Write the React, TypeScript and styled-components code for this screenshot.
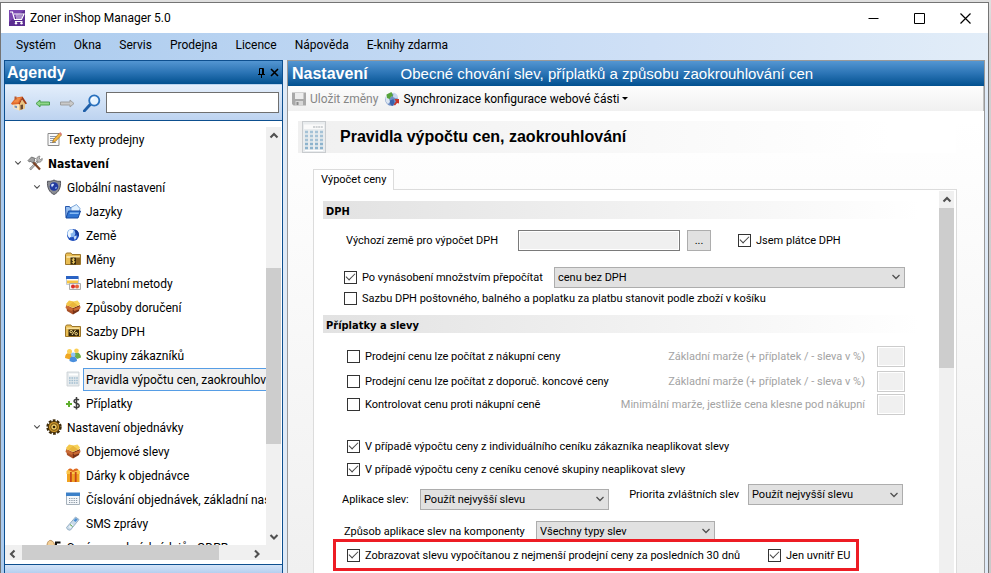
import React, { useState } from 'react';
import styled, { createGlobalStyle, css } from 'styled-components';

const uiFont = 'Roboto, "Open Sans", sans-serif';
const boldFont = '"DejaVu Sans Condensed", "DejaVu Sans", sans-serif';
const headFont = '"Liberation Sans", Arial, sans-serif';

const GlobalStyle = createGlobalStyle`
  *, *::before, *::after { box-sizing: border-box; }
  body { margin: 0; font: 11px/14px ${uiFont}; color: #000; background: #d4d2d2; }
  button, input, select { font: inherit; color: inherit; margin: 0; border-radius: 0; }
  svg { display: block; flex: none; }
`;

const Desktop = styled.div`
  height: 100vh;
  overflow: hidden;
  padding: 2px 2px 0 0;
  background: linear-gradient(#dfdfdf 0 3px, #d2d0d0 40px, #cbc9c9);
`;

const Window = styled.div`
  height: 100%;
  display: flex;
  flex-direction: column;
  border: 1px solid #747474;
  border-bottom: 0;
  background: #e2edf8;
`;

const TitleBar = styled.header`
  display: flex;
  align-items: center;
  height: 30px;
  flex: none;
  padding-left: 8px;
  gap: 5px;
  background: #fff;
  font-size: 12px;
`;

const WindowTitle = styled.h1`
  flex: 1;
  margin: 0;
  font-size: 12px;
  font-weight: 400;
`;

const CaptionButtons = styled.div`
  display: flex;
`;

const CaptionButton = styled.button`
  display: grid;
  place-items: center;
  width: 46px;
  height: 30px;
  padding: 0;
  border: 0;
  background: none;
`;

const MenuBar = styled.nav`
  display: flex;
  flex: none;
  align-items: center;
  height: 27px;
  padding: 0 6px 3px;
  background: linear-gradient(90deg, #abcbee, #cfe0f6 66%, #e2edf8);
`;

const MenuItem = styled.button`
  padding: 0 9px;
  border: 0;
  background: none;
  font-size: 12px;
`;

const Body = styled.div`
  flex: 1;
  min-height: 0;
  display: flex;
  gap: 4px;
  padding: 0 3px;
  background: linear-gradient(90deg, #abcbee 0 3px, #dfeaf7 3px);
`;

const SidePanel = styled.aside`
  width: 279px;
  flex: none;
  display: flex;
  flex-direction: column;
  border: 1px solid #0d4f8f;
  border-bottom: 0;
  background: #fff;
`;

const blueBar = css`
  display: flex;
  flex: none;
  align-items: center;
  color: #fff;
  background: linear-gradient(#5496d2, #2b74b5 50%, #01508f);
  font-family: ${headFont};
`;

const SideHeader = styled.div`
  ${blueBar}
  height: 23px;
  padding: 0 1px 0 2px;
`;

const BarTitle = styled.h2`
  flex: 1;
  margin: 0;
  font: bold 16px/20px ${headFont};
`;

const BarButton = styled.button`
  display: grid;
  place-items: center;
  width: 13px;
  height: 14px;
  padding: 0;
  border: 0;
  background: none;
`;

const SideToolbar = styled.div`
  display: flex;
  flex: none;
  align-items: center;
  height: 37px;
  padding: 0 3px 0 6px;
  gap: 8px;
  border-top: 1px solid #b9d3ee;
  border-bottom: 1px solid #0d4f8f;
  background: linear-gradient(#e3eefb, #bdd3f0);
`;

const ToolButton = styled.button`
  padding: 0;
  border: 0;
  background: none;
`;

const SearchInput = styled.input`
  flex: 1;
  min-width: 0;
  height: 21px;
  margin-left: -3px;
  padding: 0 4px;
  border: 1px solid #6f6f6f;
  background: #fff;
`;

const TreeArea = styled.div`
  flex: 1;
  min-height: 0;
  display: grid;
  grid-template-columns: minmax(0, 1fr) 15px;
  grid-template-rows: minmax(0, 1fr) 15px;
  padding: 6px 1px 4px 0;
`;

const Tree = styled.ul`
  margin: 0;
  padding: 0;
  overflow: hidden;
  list-style: none;
`;

const TreeRow = styled.li<{ $level: number }>`
  display: flex;
  align-items: center;
  height: 24px;
  gap: 2px;
  padding-left: ${p => 6 + 19 * p.$level}px;
`;

const Expander = styled.button`
  width: 14px;
  height: 16px;
  flex: none;
  display: grid;
  place-items: center start;
  padding: 0 0 0 3px;
  border: 0;
  background: none;
`;

const ExpanderGap = styled.span`
  width: 14px;
  flex: none;
`;

const TreeLabel = styled.button<{ $selected?: boolean; $strong?: boolean }>`
  height: 23px;
  flex: none;
  padding: 1px 2px 0;
  border: 1px solid ${p => (p.$selected ? '#569de5' : 'transparent')};
  background: ${p => (p.$selected ? '#f0f0f0' : 'none')};
  font-family: ${p => (p.$strong ? boldFont : uiFont)};
  font-size: 12px;
  font-weight: ${p => (p.$strong ? 700 : 400)};
  white-space: nowrap;
  text-align: left;
`;

const ScrollTrack = styled.div<{ $horizontal?: boolean }>`
  display: flex;
  flex-direction: ${p => (p.$horizontal ? 'row' : 'column')};
  background: #f0f0f0;
`;

const ScrollButton = styled.button`
  display: grid;
  place-items: center;
  flex: none;
  width: 17px;
  height: 17px;
  padding: 0 2px 0 0;
  border: 0;
  background: none;
`;

const ScrollSpace = styled.div<{ $grow: number }>`
  flex: ${p => p.$grow} 1 0;
`;

const ScrollThumb = styled.div<{ $grow: number }>`
  flex: ${p => p.$grow} 1 0;
  background: #cdcdcd;
`;

const SideFooter = styled.div`
  height: 9px;
  flex: none;
  border-top: 1px solid #0d4f8f;
  background: linear-gradient(#d3e3f7, #b5cff0);
`;

const Main = styled.main`
  flex: 1;
  min-width: 0;
  display: flex;
  flex-direction: column;
  border: 1px solid #999;
  border-bottom: 0;
  background: linear-gradient(#fff 60px, #f0f0f0);
`;

const MainHeader = styled.div`
  ${blueBar}
  height: 25px;
  padding-left: 4px;
  gap: 33px;
`;

const MainTitle = styled.h2`
  margin: 0;
  font: bold 16px/20px ${headFont};
`;

const MainSubtitle = styled.p`
  margin: 0;
  padding-top: 1px;
  font: 15px/20px ${headFont};
  white-space: nowrap;
`;

const MainToolbar = styled.div`
  display: flex;
  flex: none;
  align-items: center;
  height: 25px;
  gap: 6px;
  padding-left: 3px;
  border-right: 1px solid #c0c0c0;
  background: linear-gradient(#fdfdfd, #f0f0f0);
`;

const ToolbarAction = styled.button`
  display: flex;
  align-items: center;
  gap: 3px;
  padding: 0;
  border: 0;
  background: none;
  font-size: 12px;
  &:disabled { color: #868686; }
`;

const PageHead = styled.div`
  display: flex;
  flex: none;
  align-items: center;
  height: 32px;
  margin: 10px 28px 16px 10px;
  padding-left: 4px;
  gap: 14px;
  background: linear-gradient(90deg, #f0f0f0, #fff 90%);
`;

const PageTitle = styled.h3`
  margin: 0;
  font: bold 16px/20px ${headFont};
`;

const Tabs = styled.div`
  display: flex;
  flex: none;
  margin: 0 28px -1px 25px;
`;

const Tab = styled.button`
  height: 21px;
  padding: 0 7px;
  border: 1px solid #dcdcdc;
  border-bottom: 0;
  background: #fff;
  z-index: 1;
`;

const TabPage = styled.div`
  flex: 1;
  min-height: 0;
  display: grid;
  grid-template-columns: minmax(0, 1fr) 15px;
  margin: 0 27px 0 25px;
  padding: 1px 2px 0 0;
  border: 1px solid #dcdcdc;
  border-bottom: 0;
  background: #fff;
`;

const FormScroll = styled.form`
  overflow: hidden;
  padding: 10px 2px 0 9px;
`;

const Section = styled.h4`
  height: 18px;
  margin: 0;
  padding: 2px 3px 0;
  background: linear-gradient(90deg, #e2e2e2, #fff 97%);
  font: bold 11px/18px ${boldFont};
`;

const FieldRow = styled.div<{ $height: number; $indent: number; $spread?: boolean }>`
  display: flex;
  align-items: center;
  justify-content: ${p => (p.$spread ? 'space-between' : 'flex-start')};
  height: ${p => p.$height}px;
  padding: 0 32px 0 ${p => p.$indent}px;
  white-space: nowrap;
`;

const FieldGroup = styled.div<{ $top?: number }>`
  display: grid;
  padding-top: ${p => p.$top ?? 0}px;
`;

const Label = styled.label<{ $width?: number }>`
  width: ${p => (p.$width ? `${p.$width}px` : 'auto')};
  padding-top: 1px;
  flex: none;
`;

const RaisedPair = styled.div`
  display: flex;
  align-items: center;
  gap: 9px;
  padding: 0 2px 9px 0;
`;

const MarginPair = styled.div`
  display: flex;
  align-items: center;
  gap: 12px;
  color: #a3a3a3;
`;

const TextInput = styled.input<{ $width: number }>`
  width: ${p => p.$width}px;
  height: 21px;
  flex: none;
  border: 1px solid #7a7a7a;
  background: #f0f0f0;
  box-shadow: inset 0 0 0 1px #fff;
  &:disabled { border-color: #ccc; }
`;

const BrowseButton = styled.button`
  width: 24px;
  height: 21px;
  margin: 0 27px 0 7px;
  padding: 0;
  border: 1px solid #adadad;
  background: #e1e1e1;
`;

const CheckLabel = styled.label<{ $width?: number }>`
  display: flex;
  align-items: center;
  flex: none;
  gap: 5px;
  width: ${p => (p.$width ? `${p.$width}px` : 'auto')};
`;

const CheckText = styled.span`
  padding-top: 1px;
`;

const CheckBox = styled.input`
  appearance: none;
  display: grid;
  place-items: center;
  width: 13px;
  height: 13px;
  flex: none;
  border: 1px solid #333;
  background: #fff;
  &:checked::after {
    content: '';
    width: 9px;
    height: 5px;
    margin-top: -4px;
    border: solid #444;
    border-width: 0 0 1px 1px;
    transform: rotate(-45deg);
  }
`;

const SelectBox = styled.div<{ $width?: number }>`
  flex: ${p => (p.$width ? 'none' : '1')};
  width: ${p => (p.$width ? `${p.$width}px` : 'auto')};
  display: grid;
  align-items: center;
  > * { grid-area: 1 / 1; }
  > svg { justify-self: end; margin-right: 4px; pointer-events: none; }
`;

const SelectField = styled.select`
  appearance: none;
  width: 100%;
  height: 21px;
  padding: 1px 20px 0 3px;
  border: 1px solid #adadad;
  background: #e1e1e1;
`;

const Highlight = styled.div`
  position: relative;
  display: flex;
  align-items: center;
  width: 526px;
  height: 32px;
  margin: -5px 0 0 10px;
  padding-left: 11px;
  border: 3px solid #ed1c24;
  background: #fff;
  white-space: nowrap;
`;

type Dir = 'up' | 'down' | 'left' | 'right';
const chevrons: Record<Dir, string> = {
  up: 'M1.5 6.5 5 3l3.500 3.500',
  down: 'M1.5 3 5 6.5 8.5 3',
  left: 'M6.5 1.5 3 5l3.5 3.5',
  right: 'M3 1.5 6.5 5 3 8.5',
};

function Chevron({ dir, bold, size = 10 }: { dir: Dir; bold?: boolean; size?: number }) {
  return (
    <svg width={size} height={size} viewBox="0 0 10 10" fill="none" stroke="#505050" strokeWidth={bold ? 2.1 : 1.3}>
      <path d={chevrons[dir]} />
    </svg>
  );
}

function Icon({ children, size = 16 }: { children: React.ReactNode; size?: number }) {
  return <svg width={size} height={size} viewBox="0 0 16 16" aria-hidden="true">{children}</svg>;
}

const icons = {
  app: (
    <Icon>
      <path fill="#5b2d91" d="M0 0h16v16H0z" />
      <path fill="#7a46b0" d="M0 0h16L0 12z" />
      <path d="M1 2h2.500l2 7.500h7L15 4H5M6 11.500h7.500" fill="none" stroke="#fff" strokeWidth="1.200" />
      <path d="M6.500 6h7M7 8h6M8 4v5M10 4v5M12 4v5" stroke="#e3d2f5" strokeWidth=".7" />
      <circle cx="7" cy="13.300" r="1.200" fill="#fff" />
      <circle cx="12.500" cy="13.300" r="1.200" fill="#fff" />
    </Icon>
  ),
  home: (
    <Icon>
      <path d="M2 8v5l6 2.500 6-2V8L10 4z" fill="#f6e6c6" />
      <path d="M8 15.500 14 13.500V8l-3-3-3 4z" fill="#eac583" />
      <path d="M0 8.500 5 2.500l6.500-1L8 9 1 9.800z" fill="#e2692a" />
      <path d="M2 7.500 6 3l4-.5L7 7.500z" fill="#f08b45" />
      <path d="M11.500 1.500 16 8.500l-1.500.8L11 4.500 8.500 9.500 7.500 9z" fill="#a03a14" />
      <path d="M9.500 10 12 9.500V14l-2.500.8z" fill="#6a4a35" />
      <path d="M3.500 10.500 6 11v2.300l-2.500-.8z" fill="#7590b8" />
      <path d="M3.500 1.500h2v3h-2z" fill="#b35a35" />
    </Icon>
  ),
  back: (
    <Icon>
      <path d="M1 8.500 5 5v2h9.500v3H5v2z" fill="#8fd68a" stroke="#3f9a42" strokeWidth=".9" />
    </Icon>
  ),
  forward: (
    <Icon>
      <path d="M15 8.500 11 5v2H1.500v3H11v2z" fill="#c9c9c9" stroke="#9a9a9a" strokeWidth=".9" />
    </Icon>
  ),
  search: (
    <Icon size={18}>
      <path d="m1.200 15 5-5.500" stroke="#1f5fa8" strokeWidth="2.600" strokeLinecap="round" />
      <circle cx="10" cy="5.800" r="4.500" fill="#e6f3ff" stroke="#2a71bd" strokeWidth="1.600" />
      <path d="M7.500 5.500A3 3 0 0 1 10 3" stroke="#fff" fill="none" />
    </Icon>
  ),
  note: (
    <Icon>
      <path d="M2 2.500h11v12H2z" fill="#fafafa" stroke="#8b8b8b" />
      <path d="M4 5.500h7M4 7.500h5M4 9.500h4M4 11.500h6" stroke="#8d99ac" />
      <path d="m6.500 11.500 1-3L13.500 2l2 2-6.200 6.500z" fill="#f3b53d" stroke="#9a6a1c" strokeWidth=".7" />
      <path d="m13 2.500 1.200-1.500L16 3l-1 1.500z" fill="#dc7d78" />
    </Icon>
  ),
  tools: (
    <Icon>
      <path d="m3 14.500 8.500-9" stroke="#7f7f7f" strokeWidth="2.400" />
      <path d="m3.500 14 8-8.500" stroke="#dedede" strokeWidth="1" />
      <path d="M10 5.500C9 2.500 11 1 13 1.200L12 3l1.500 1.500L15.300 3.500C15.600 6 13 8 11 7z" fill="#bdbdbd" stroke="#707070" strokeWidth=".7" />
      <path d="m5.500 6.500 7.500 8" stroke="#7b4224" strokeWidth="2.200" />
      <path d="M1 5.500 4.500 2l4 1.500-1 1L7.800 6 5.500 8 4 6.200 2.300 7z" fill="#a0a0a0" stroke="#555" strokeWidth=".7" />
    </Icon>
  ),
  shield: (
    <Icon>
      <path d="M8 1c2 1.200 4.500 1.500 6.500 1.200C15 9 12.500 13.500 8 15.500 3.500 13.500 1 9 1.500 2.200 3.500 2.500 6 2.200 8 1z" fill="#8b8d93" stroke="#4a4a52" strokeWidth=".9" />
      <circle cx="8" cy="7.500" r="4.300" fill="#2139a0" />
      <path d="M5 6c1-2 3-1.500 3-.5S6.500 7 6 8.500z" fill="#d4e4ff" />
      <path d="m9 8.500 2-.8c.2 1.500-.8 2.300-1.700 2.300z" fill="#7fa5ea" />
    </Icon>
  ),
  languages: (
    <Icon>
      <path d="M.5 3.500h4l1 1.500h6v9.500H1z" fill="#94bdf0" stroke="#2556ac" />
      <path d="m6 4.500 5.500-3 3.500 4-1 4H6z" fill="#dff0ff" stroke="#5d91cf" strokeWidth=".8" />
      <path d="M3.500 8h12L13 15H1z" fill="#2f74d2" stroke="#184a9f" />
      <path d="M5 9.500h9l-.5 1.500h-9z" fill="#89bbf3" />
    </Icon>
  ),
  globe: (
    <Icon>
      <circle cx="8" cy="8" r="6" fill="#1f4fbd" />
      <circle cx="6.200" cy="6.200" r="4" fill="#8ab8ef" />
      <path d="M4 3.500c2-1.500 4-1 4.500 0L7.500 6 5.500 6.500 6 9.500l-1.500 1.500C2.500 9 2 6 4 3.500z" fill="#eef7ff" />
      <path d="m8.500 9.500 3-1c.5 2-.8 3.800-2 4.300z" fill="#c5dcf8" />
      <path d="M10 2.500c3.500 1 4.500 4.500 3.800 7C12 8 10 6 10 2.500z" fill="#173b93" />
    </Icon>
  ),
  currency: (
    <Icon>
      <path d="M.5 3.500 1.500 2H6l1 1.500h8.500v10H.5z" fill="#e9bd54" stroke="#9c762a" />
      <path d="M1.500 5h13v2h-13z" fill="#f7df9c" />
      <path d="M5.500 6.500H11v7H5.500z" fill="#33250b" />
      <path d="M11 6.500h4v7h-4z" fill="#8a6420" />
      <path d="M9.800 8.300C8.500 7.700 7 8 7 8.900c0 1.300 2.800.6 2.800 1.900 0 1.100-1.800 1.200-3 .6M8.400 7.200v5.600" stroke="#ffda6a" fill="none" strokeWidth=".9" />
    </Icon>
  ),
  payment: (
    <Icon>
      <path d="M1.500 2.500h12v7h-12z" fill="#fff" stroke="#c3ccd6" />
      <path d="M1 1h12.500v3H1z" fill="#2a63c4" />
      <path d="M2 5.500h11v3H2z" fill="#f5c443" />
      <path d="M4.500 8.500h11v6h-11z" fill="#f1f1f1" stroke="#adadad" />
      <circle cx="8" cy="11.500" r="2" fill="#dc2d28" />
      <circle cx="12" cy="11.500" r="2" fill="#e8663a" />
    </Icon>
  ),
  box: (
    <Icon>
      <path d="m1 6 7 3v6.500L2 12z" fill="#a95027" />
      <path d="m8 9 7-3-1 6-6 3.500z" fill="#7a3317" />
      <path d="m2 6 6-3.500L14.500 6 8 9z" fill="#e9b63c" />
      <path d="m1 5 3-3.500 4.500 1L5 5.500 2.500 8z" fill="#f3c648" />
      <path d="M8 2.500 12.500 1.500 15 4.500 13.500 7z" fill="#f7d25b" />
      <path d="m1 7 3 .5L8 10l-1.500 2L.5 9zM8 10l5-2 2.700-.5L15 10l-5.500 2z" fill="#c96a34" />
    </Icon>
  ),
  percent: (
    <Icon>
      <path d="M.5 3.500 1.500 2H6l1 1.500h8.500v10H.5z" fill="#e9bd54" stroke="#9c762a" />
      <path d="M1.500 4.500h13v1.500h-13z" fill="#f7df9c" />
      <path d="M3.500 6.500H14v6.500H3.500z" fill="#33250b" />
      <path d="m7 12 3.500-5" stroke="#ffe389" />
      <circle cx="6.200" cy="8.600" r="1.200" fill="none" stroke="#ffe389" />
      <circle cx="11.200" cy="10.700" r="1.200" fill="none" stroke="#ffe389" />
    </Icon>
  ),
  people: (
    <Icon>
      <path d="M0 11c0-3.500 1.500-5 4-5s4 1.500 4 4l-3 2.500z" fill="#f0a823" />
      <circle cx="4.500" cy="4.500" r="2.500" fill="#fbd25a" />
      <path d="M9 9c0-2 1-3.500 3-3.500s4 2 4 5L12 12z" fill="#6fae45" />
      <circle cx="11.500" cy="3.800" r="2.300" fill="#fbcf55" />
      <path d="M4.500 14c0-3 1-4.500 3.500-4.500s4 1.500 4 4.500c-2 1.500-5.500 1.500-7.500 0z" fill="#4a8fdd" />
      <circle cx="8.200" cy="7.800" r="2.300" fill="#8fc2f5" />
    </Icon>
  ),
  calculator: (
    <Icon>
      <path d="M2 1h12v14H2z" fill="#e6ebee" stroke="#c8ced2" strokeWidth=".8" />
      <path d="M4 2.500h9v2H4z" fill="#fff" />
      <path d="M4 7h9M4 9.500h9M4 12h9" stroke="#a3bfd1" strokeWidth="1.600" strokeDasharray="1.600 .8" />
    </Icon>
  ),
  surcharge: (
    <Icon>
      <path d="M1 9h6M4 6v6" stroke="#5fae2e" strokeWidth="2" />
      <path d="M14 5c-1.500-1.300-5-1-5 1.200S14.200 8 14.200 10.500s-3.700 2.800-5.500 1M11.500 2v12.500" fill="none" stroke="#3d3d3d" strokeWidth="1.500" />
    </Icon>
  ),
  gear: (
    <Icon>
      <circle cx="8" cy="8" r="6.200" fill="none" stroke="#3d2a08" strokeWidth="3" strokeDasharray="2.600 1.300" />
      <circle cx="8" cy="8" r="5.600" fill="#c9932a" stroke="#4b340b" />
      <circle cx="8" cy="8" r="3.300" fill="#f2cf6a" stroke="#6a4a0e" />
      <circle cx="8" cy="8" r="1.300" fill="#2e1f05" />
    </Icon>
  ),
  gift: (
    <Icon>
      <path d="M2 6h12.500v9H2z" fill="#f1a320" />
      <path d="M1.500 4 4 2l4 1 4-1 3 2v3h-13.500z" fill="#fbc548" />
      <path d="M5 5h1.800v10H5zM9.800 5h1.800v10H9.800z" fill="#c6461a" />
      <path d="M3 3c2-2.500 4-1.500 5 .5C9 1.500 12 .5 13.500 3L8 5z" fill="#df6a22" />
    </Icon>
  ),
  calendar: (
    <Icon>
      <path d="M1.500 2.500h13v11h-13z" fill="#f4f7fa" stroke="#a6b1bb" />
      <path d="M1 1.500h14v3.500H1z" fill="#3c80c8" />
      <path d="M4 7.500h9M4 9.500h9M4 11.500h9" stroke="#8d99a5" strokeWidth="1.100" strokeDasharray="1.300 1" />
    </Icon>
  ),
  phone: (
    <Icon>
      <path d="m1.500 12.500 9-10.500 3.500 2.500-8.500 10.500c-1.500.7-4-1-4-2.500z" fill="#c9dae8" stroke="#8fa9bf" strokeWidth=".9" />
      <path d="m8.500 5.500 2.300-2.500 2 1.500L10.500 7z" fill="#4b8fd4" />
      <path d="m3.500 12 3-3.500 2 1.500-3 3.500z" fill="#e9f2f9" />
      <path d="m5 9.500 2.500 2" stroke="#58a03f" />
    </Icon>
  ),
  privacy: (
    <Icon>
      <path d="M1 7C1 3 3 1 5 1.500S9 4 8.500 8v6H3z" fill="#f3cf98" stroke="#a8793c" strokeWidth=".8" />
      <path d="M14.500 3.500H10v4c3-.8 5 0 4.500 2.500S11 13 9.500 12" stroke="#111" strokeWidth="2" fill="none" />
    </Icon>
  ),
  save: (
    <Icon>
      <path d="M1 1.500h14v13H2.500L1 13z" fill="#a9a9a9" />
      <path d="M4 2h8.500v6H4z" fill="#ededed" />
      <path d="M4.500 10h7.500v4.500H4.500z" fill="#d8d8d8" />
      <path d="M5.500 11h2v3h-2z" fill="#8b8b8b" />
    </Icon>
  ),
  sync: (
    <Icon>
      <circle cx="7.500" cy="8.500" r="6.300" fill="#6f8fc4" />
      <path d="M1.500 7c0-3 3-5.500 6-5.500L8 5 5 7.500 6 11 4 13C2 12 1.500 9 1.500 7z" fill="#dce6f2" />
      <path d="M2.500 3.500 7.500 1 9 5l-2 .8L5.500 8 3 7z" fill="#58a339" />
      <path d="M9.500 1.500c2.500.5 4.500 2.500 4.500 5l-2 1-3-1.500z" fill="#c9d8ee" />
      <path d="M6 9.500 9.500 8l1 4-2 3C6.500 14.500 5.500 12 6 9.500z" fill="#3a63ae" />
      <path d="M10.500 8h4.500v4.500l-2-.5-2 2.500-1.300-1L12 10.500z" fill="#cb3428" />
    </Icon>
  ),
};

const bigCalculator = (
  <svg width="24" height="32" viewBox="0 0 24 32" aria-hidden="true">
    <rect x=".5" y=".5" width="23" height="31" fill="#e9ecee" stroke="#c9cccf" />
    <path d="M2 3.500h20v4.500H2z" fill="#fafafa" />
    <path d="M11 6h10" stroke="#a4abb0" strokeDasharray="2 .6" />
    {[11, 15, 19, 23, 27].map(y => (
      <path key={y} d={`M3 ${y}h18`} stroke={y > 20 ? '#8db3cd' : '#a5c2d6'} strokeWidth="2.500" strokeDasharray="3 2" />
    ))}
    <path d="M3 29.500h18" stroke="#fff" />
  </svg>
);

const menu = ['Systém', 'Okna', 'Servis', 'Prodejna', 'Licence', 'Nápověda', 'E-knihy zdarma'];

type Node = { text: string; icon: keyof typeof icons; level: number; open?: boolean; strong?: boolean };
const nodes: Node[] = [
  { text: 'Texty prodejny', icon: 'note', level: 1 },
  { text: 'Nastavení', icon: 'tools', level: 0, open: true, strong: true },
  { text: 'Globální nastavení', icon: 'shield', level: 1, open: true },
  { text: 'Jazyky', icon: 'languages', level: 2 },
  { text: 'Země', icon: 'globe', level: 2 },
  { text: 'Měny', icon: 'currency', level: 2 },
  { text: 'Platební metody', icon: 'payment', level: 2 },
  { text: 'Způsoby doručení', icon: 'box', level: 2 },
  { text: 'Sazby DPH', icon: 'percent', level: 2 },
  { text: 'Skupiny zákazníků', icon: 'people', level: 2 },
  { text: 'Pravidla výpočtu cen, zaokrouhlování', icon: 'calculator', level: 2 },
  { text: 'Příplatky', icon: 'surcharge', level: 2 },
  { text: 'Nastavení objednávky', icon: 'gear', level: 1, open: true },
  { text: 'Objemové slevy', icon: 'box', level: 2 },
  { text: 'Dárky k objednávce', icon: 'gift', level: 2 },
  { text: 'Číslování objednávek, základní nastavení', icon: 'calendar', level: 2 },
  { text: 'SMS zprávy', icon: 'phone', level: 2 },
  { text: 'Správa osobních údajů - GDPR', icon: 'privacy', level: 1, open: true },
];

function Check({ text, checked, width }: { text: string; checked?: boolean; width?: number }) {
  return (
    <CheckLabel $width={width}>
      <CheckBox type="checkbox" defaultChecked={checked} />
      <CheckText>{text}</CheckText>
    </CheckLabel>
  );
}

function Select({ id, value, width, label }: { id?: string; value: string; width?: number; label?: string }) {
  return (
    <SelectBox $width={width}>
      <SelectField id={id} aria-label={label} defaultValue={value}>
        <option>{value}</option>
      </SelectField>
      <Chevron dir="down" />
    </SelectBox>
  );
}

function MarginField({ id, text }: { id: string; text: string }) {
  return (
    <MarginPair>
      <Label htmlFor={id}>{text}</Label>
      <TextInput id={id} $width={28} disabled />
    </MarginPair>
  );
}

function CaptionGroup() {
  return (
    <CaptionButtons>
      <CaptionButton aria-label="Minimalizovat">
        <svg width="11" height="11" viewBox="0 0 11 11" stroke="#000"><path d="M.5 5.500h10" /></svg>
      </CaptionButton>
      <CaptionButton aria-label="Maximalizovat">
        <svg width="11" height="11" viewBox="0 0 11 11" fill="none" stroke="#000"><path d="M.5.500h10v10H.5z" /></svg>
      </CaptionButton>
      <CaptionButton aria-label="Zavřít">
        <svg width="11" height="11" viewBox="0 0 11 11" stroke="#000" strokeWidth="1.200"><path d="m.5.500 10 10M10.500.500l-10 10" /></svg>
      </CaptionButton>
    </CaptionButtons>
  );
}

function Sidebar() {
  const [selected, setSelected] = useState('Pravidla výpočtu cen, zaokrouhlování');
  return (
    <SidePanel>
      <SideHeader>
        <BarTitle>Agendy</BarTitle>
        <BarButton aria-label="Připnout">
          <svg width="9" height="10" viewBox="0 0 9 10" fill="none" stroke="#000">
            <path d="M2.500 6V.5h4V6M5.500 1v5M1 6.500h7M4.500 6.500V10" />
          </svg>
        </BarButton>
        <BarButton aria-label="Zavřít panel">
          <svg width="9" height="9" viewBox="0 0 9 9" stroke="#000" strokeWidth="1.600">
            <path d="m1 1 7 7M8 1 1 8" />
          </svg>
        </BarButton>
      </SideHeader>
      <SideToolbar>
        <ToolButton aria-label="Domů">{icons.home}</ToolButton>
        <ToolButton aria-label="Zpět">{icons.back}</ToolButton>
        <ToolButton aria-label="Vpřed">{icons.forward}</ToolButton>
        <ToolButton aria-label="Hledat">{icons.search}</ToolButton>
        <SearchInput aria-label="Hledaný text" />
      </SideToolbar>
      <TreeArea>
        <Tree>
          {nodes.map(n => (
            <TreeRow key={n.text} $level={n.level}>
              {n.open ? <Expander aria-label="Sbalit"><Chevron dir="down" size={8} /></Expander> : <ExpanderGap />}
              {icons[n.icon]}
              <TreeLabel $selected={n.text === selected} $strong={n.strong} onClick={() => setSelected(n.text)}>
                {n.text}
              </TreeLabel>
            </TreeRow>
          ))}
        </Tree>
        <ScrollTrack>
          <ScrollButton aria-label="Nahoru"><Chevron dir="up" bold size={10} /></ScrollButton>
          <ScrollSpace $grow={124} />
          <ScrollThumb $grow={176} />
          <ScrollSpace $grow={84} />
          <ScrollButton aria-label="Dolů"><Chevron dir="down" bold size={10} /></ScrollButton>
        </ScrollTrack>
        <ScrollTrack $horizontal>
          <ScrollButton aria-label="Vlevo"><Chevron dir="left" bold size={10} /></ScrollButton>
          <ScrollThumb $grow={197} />
          <ScrollSpace $grow={30} />
          <ScrollButton aria-label="Vpravo"><Chevron dir="right" bold size={10} /></ScrollButton>
        </ScrollTrack>
        <ScrollTrack />
      </TreeArea>
      <SideFooter />
    </SidePanel>
  );
}

function PriceForm() {
  return (
    <FormScroll>
      <Section>DPH</Section>
      <FieldRow $height={43} $indent={23}>
        <Label $width={172} htmlFor="country">Výchozí země pro výpočet DPH</Label>
        <TextInput id="country" $width={162} readOnly />
        <BrowseButton type="button">...</BrowseButton>
        <Check text="Jsem plátce DPH" checked />
      </FieldRow>
      <FieldRow $height={30} $indent={21}>
        <Check text="Po vynásobení množstvím přepočítat" checked width={210} />
        <Select value="cenu bez DPH" label="Přepočítat" />
      </FieldRow>
      <FieldRow $height={12} $indent={21}>
        <Check text="Sazbu DPH poštovného, balného a poplatku za platbu stanovit podle zboží v košíku" />
      </FieldRow>
      <FieldGroup $top={11}>
        <Section>Příplatky a slevy</Section>
      </FieldGroup>
      <FieldGroup $top={10}>
        <FieldRow $height={26} $indent={24} $spread>
          <Check text="Prodejní cenu lze počítat z nákupní ceny" />
          <MarginField id="m1" text="Základní marže (+ příplatek / - sleva v %)" />
        </FieldRow>
        <FieldRow $height={24} $indent={24} $spread>
          <Check text="Prodejní cenu lze počítat z doporuč. koncové ceny" />
          <MarginField id="m2" text="Základní marže (+ příplatek / - sleva v %)" />
        </FieldRow>
        <FieldRow $height={22} $indent={24} $spread>
          <Check text="Kontrolovat cenu proti nákupní ceně" />
          <MarginField id="m3" text="Minimální marže, jestliže cena klesne pod nákupní" />
        </FieldRow>
      </FieldGroup>
      <FieldGroup $top={19}>
        <FieldRow $height={24} $indent={24}>
          <Check text="V případě výpočtu ceny z individuálního ceníku zákazníka neaplikovat slevy" checked />
        </FieldRow>
        <FieldRow $height={22} $indent={24}>
          <Check text="V případě výpočtu ceny z ceníku cenové skupiny neaplikovat slevy" checked />
        </FieldRow>
      </FieldGroup>
      <FieldRow $height={38} $indent={19} $spread>
        <Label $width={78} htmlFor="apply">Aplikace slev:</Label>
        <Select id="apply" value="Použít nejvyšší slevu" width={189} />
        <ScrollSpace $grow={1} />
        <RaisedPair>
          <Label htmlFor="priority">Priorita zvláštních slev</Label>
          <Select id="priority" value="Použít nejvyšší slevu" width={155} />
        </RaisedPair>
      </FieldRow>
      <FieldRow $height={26} $indent={21}>
        <Label $width={192} htmlFor="parts">Způsob aplikace slev na komponenty</Label>
        <Select id="parts" value="Všechny typy slev" width={179} />
      </FieldRow>
      <Highlight>
        <Check text="Zobrazovat slevu vypočítanou z nejmenší prodejní ceny za posledních 30 dnů" checked width={421} />
        <Check text="Jen uvnitř EU" checked />
      </Highlight>
    </FormScroll>
  );
}

export default function App() {
  return (
    <>
      <GlobalStyle />
      <Desktop>
        <Window>
          <TitleBar>
            {icons.app}
            <WindowTitle>Zoner inShop Manager 5.0</WindowTitle>
            <CaptionGroup />
          </TitleBar>
          <MenuBar>
            {menu.map(m => <MenuItem key={m}>{m}</MenuItem>)}
          </MenuBar>
          <Body>
            <Sidebar />
            <Main>
              <MainHeader>
                <MainTitle>Nastavení</MainTitle>
                <MainSubtitle>Obecné chování slev, příplatků a způsobu zaokrouhlování cen</MainSubtitle>
              </MainHeader>
              <MainToolbar>
                <ToolbarAction disabled>{icons.save}Uložit změny</ToolbarAction>
                <ToolbarAction>
                  {icons.sync}Synchronizace konfigurace webové části
                  <svg width="6" height="3" viewBox="0 0 6 3"><path d="M0 0h6L3 3z" /></svg>
                </ToolbarAction>
              </MainToolbar>
              <PageHead>
                {bigCalculator}
                <PageTitle>Pravidla výpočtu cen, zaokrouhlování</PageTitle>
              </PageHead>
              <Tabs role="tablist">
                <Tab role="tab" aria-selected="true">Výpočet ceny</Tab>
              </Tabs>
              <TabPage>
                <PriceForm />
                <ScrollTrack>
                  <ScrollButton aria-label="Nahoru"><Chevron dir="up" bold size={10} /></ScrollButton>
                  <ScrollThumb $grow={160} />
                  <ScrollSpace $grow={205} />
                </ScrollTrack>
              </TabPage>
            </Main>
          </Body>
        </Window>
      </Desktop>
    </>
  );
}
